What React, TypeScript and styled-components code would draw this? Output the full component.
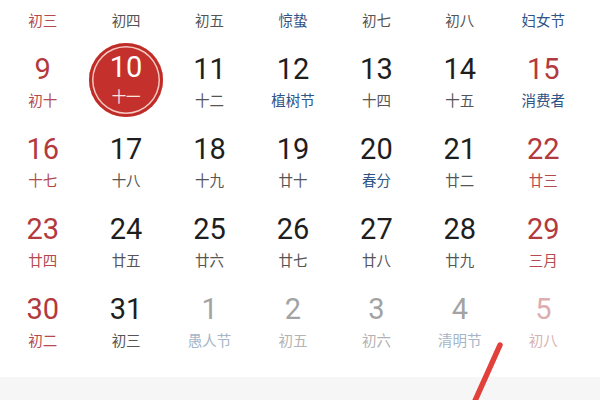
import React from "react";
import styled, { createGlobalStyle } from "styled-components";

const Global = createGlobalStyle`
  html, body { margin: 0; padding: 0; background: #fff; overflow: hidden; }
  body { width: 600px; height: 400px; font-family: Roboto, "Noto Sans", "Noto Sans CJK SC", sans-serif; }
`;

type Tone = "normal" | "weekend" | "fest" | "other" | "otherWeekend" | "otherFest";

interface Day {
  d: number;
  l: string;
  tone: Tone;
  lunarTone?: Tone;
  sel?: boolean;
}

const numColor: Record<Tone, string> = {
  normal: "#1e1e1e",
  weekend: "#b23a3e",
  fest: "#1e1e1e",
  other: "#a3a3a3",
  otherWeekend: "#dcaeb0",
  otherFest: "#a3a3a3",
};

const lunarColor: Record<Tone, string> = {
  normal: "#555555",
  weekend: "#b34a4d",
  fest: "#2f5487",
  other: "#b3b3b3",
  otherWeekend: "#d8b3b5",
  otherFest: "#a6b5c7",
};

const Page = styled.div`
  position: relative;
  width: 600px;
  height: 400px;
  overflow: hidden;
  display: flex;
  flex-direction: column;
`;

const Grid = styled.div`
  margin-top: -50px;
  padding: 0 15px 0 1px;
  display: grid;
  grid-template-columns: repeat(7, 1fr);
  grid-auto-rows: 80px;
`;

const Cell = styled.div`
  display: flex;
  justify-content: center;
  align-items: flex-start;
`;

const Bubble = styled.div<{ $sel?: boolean }>`
  margin-top: 13px;
  width: 74px;
  height: 74px;
  border-radius: 50%;
  display: flex;
  flex-direction: column;
  align-items: center;
  flex-shrink: 0;
  background: ${(p) => (p.$sel ? "#c4302b" : "transparent")};
  box-shadow: ${(p) =>
    p.$sel ? "inset 0 0 0 3px #bf2c27, inset 0 0 0 4.5px #f5c9c2" : "none"};
`;

const Num = styled.div<{ $tone: Tone; $sel?: boolean }>`
  margin-top: ${(p) => (p.$sel ? "7px" : "9px")};
  height: 34px;
  line-height: 34px;
  font-family: Roboto, "Noto Sans", sans-serif;
  font-size: 29px;
  font-weight: 400;
  color: ${(p) => (p.$sel ? "#ffffff" : numColor[p.$tone])};
`;

const Lunar = styled.div<{ $tone: Tone; $sel?: boolean }>`
  margin-top: ${(p) => (p.$sel ? "2px" : "4px")};
  height: 20px;
  line-height: 20px;
  font-family: "Noto Sans CJK SC", "Noto Sans", sans-serif;
  font-size: 14.5px;
  color: ${(p) => (p.$sel ? "#fbe3df" : lunarColor[p.$tone])};
`;

const Spacer = styled.div`
  height: 27px;
`;

const Footer = styled.div`
  flex: 1;
  background: #f6f6f6;
`;

const Stroke = styled.svg`
  position: absolute;
  left: 460px;
  top: 335px;
`;

const w = (d: number, l: string, tone: Tone, lunarTone?: Tone, sel?: boolean): Day => ({
  d,
  l,
  tone,
  lunarTone: lunarTone ?? tone,
  sel,
});

const days: Day[] = [
  w(2, "初三", "weekend"),
  w(3, "初四", "normal"),
  w(4, "初五", "normal"),
  w(5, "惊蛰", "normal", "fest"),
  w(6, "初七", "normal"),
  w(7, "初八", "normal"),
  w(8, "妇女节", "weekend", "fest"),

  w(9, "初十", "weekend"),
  w(10, "十一", "normal", "normal", true),
  w(11, "十二", "normal"),
  w(12, "植树节", "normal", "fest"),
  w(13, "十四", "normal"),
  w(14, "十五", "normal"),
  w(15, "消费者", "weekend", "fest"),

  w(16, "十七", "weekend"),
  w(17, "十八", "normal"),
  w(18, "十九", "normal"),
  w(19, "廿十", "normal"),
  w(20, "春分", "normal", "fest"),
  w(21, "廿二", "normal"),
  w(22, "廿三", "weekend"),

  w(23, "廿四", "weekend"),
  w(24, "廿五", "normal"),
  w(25, "廿六", "normal"),
  w(26, "廿七", "normal"),
  w(27, "廿八", "normal"),
  w(28, "廿九", "normal"),
  w(29, "三月", "weekend"),

  w(30, "初二", "weekend"),
  w(31, "初三", "normal"),
  w(1, "愚人节", "other", "otherFest"),
  w(2, "初五", "other"),
  w(3, "初六", "other"),
  w(4, "清明节", "other", "otherFest"),
  w(5, "初八", "otherWeekend"),
];

export default function App() {
  return (
    <Page>
      <Global />
      <Grid>
        {days.map((day, i) => (
          <Cell key={i}>
            <Bubble $sel={day.sel}>
              <Num $tone={day.tone} $sel={day.sel}>
                {day.d}
              </Num>
              <Lunar $tone={day.lunarTone ?? day.tone} $sel={day.sel}>
                {day.l}
              </Lunar>
            </Bubble>
          </Cell>
        ))}
      </Grid>
      <Spacer />
      <Footer />
      <Stroke width="60" height="70" viewBox="0 0 60 70">
        <path d="M40 10 L14 68" stroke="#e2413b" strokeWidth="5.5" strokeLinecap="round" fill="none" />
      </Stroke>
    </Page>
  );
}
